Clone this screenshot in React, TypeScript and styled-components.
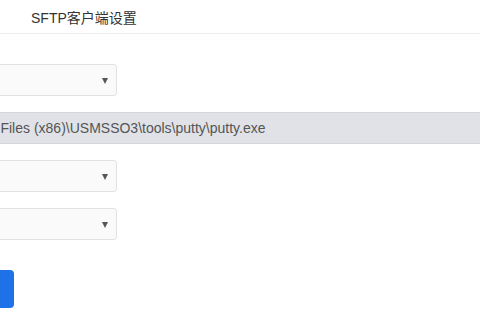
import styled, { createGlobalStyle } from "styled-components";

const Global = createGlobalStyle`
  html, body {
    margin: 0;
    padding: 0;
    background: #fff;
    overflow: hidden;
    font-family: "Liberation Sans", "Noto Sans CJK SC", Arial, sans-serif;
  }
`;

const Header = styled.div`
  height: 33px;
  border-bottom: 1px solid #ececec;
  padding-left: 31px;
  display: flex;
  align-items: center;
  font-size: 14px;
  color: #333;
`;

const Form = styled.div`
  margin-left: -88px;
  padding-top: 30px;
  display: flex;
  flex-direction: column;
  gap: 16px;
`;

const SelectBox = styled.div`
  position: relative;
  width: 205px;
  height: 32px;
  box-sizing: border-box;
  border: 1px solid #e2e2e2;
  border-radius: 3px;
  background: #fafafa;

  &::after {
    content: "";
    position: absolute;
    right: 8px;
    top: 13px;
    border-left: 3.5px solid transparent;
    border-right: 3.5px solid transparent;
    border-top: 6px solid #555;
  }
`;

const PathInput = styled.div<{ $width: number }>`
  width: ${(p) => p.$width}px;
  height: 32px;
  box-sizing: border-box;
  padding: 0 12px;
  display: flex;
  align-items: center;
  background: #e0e2e7;
  border: 1px solid #d4d6da;
  border-radius: 3px;
  font-size: 14px;
  color: #555;
  white-space: nowrap;
`;

const Submit = styled.button`
  margin-top: 14px;
  width: 102px;
  height: 38px;
  border: none;
  border-radius: 4px;
  background: #1f71e8;
  color: #fff;
  font-size: 14px;
  font-family: inherit;
`;

export default function App() {
  return (
    <>
      <Global />
      <Header>SFTP客户端设置</Header>
      <Form>
        <SelectBox />
        <PathInput $width={700}>C:\Program Files (x86)\USMSSO3\tools\putty\putty.exe</PathInput>
        <SelectBox />
        <SelectBox />
        <Submit>保存</Submit>
      </Form>
    </>
  );
}
